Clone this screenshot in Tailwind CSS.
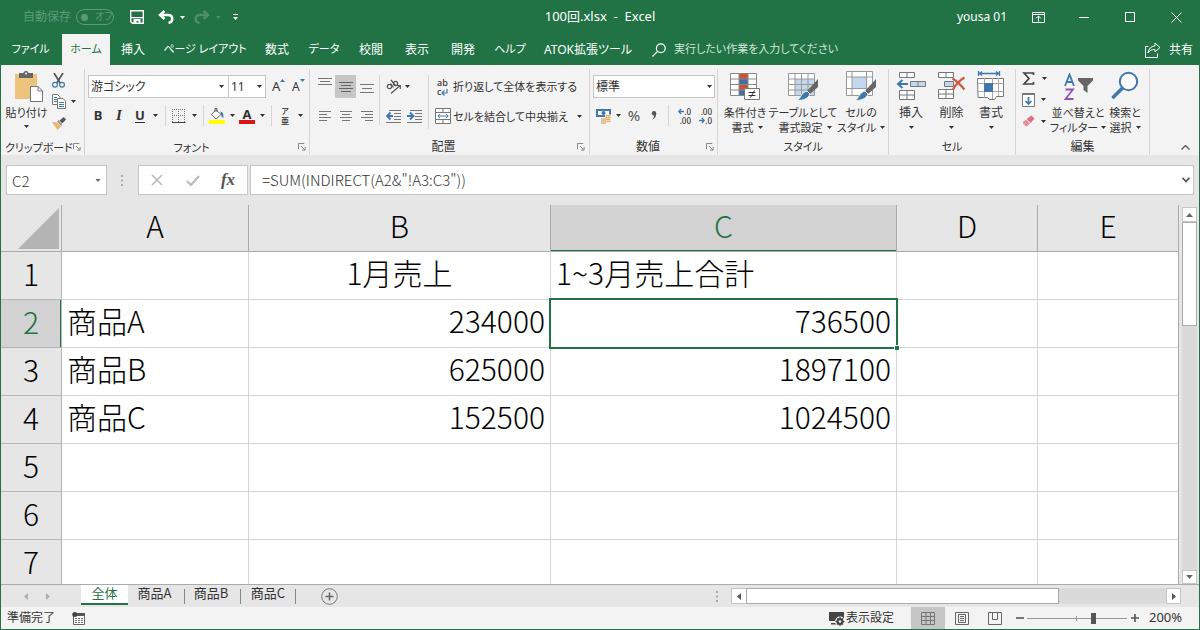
<!DOCTYPE html>
<html lang="ja">
<head>
<meta charset="utf-8">
<title>100回.xlsx - Excel</title>
<script src="https://cdn.jsdelivr.net/npm/@tailwindcss/browser@4"></script>
</head>
<body class="h-screen overflow-hidden text-xs text-[#262626] font-['Noto_Sans','Noto_Sans_CJK_JP',sans-serif] [font-feature-settings:'palt']">
<svg class="hidden">
  <symbol id="dn" viewBox="0 0 5 3"><path d="M0 0h5L2.500 3z" fill="currentColor"/></symbol>
  <symbol id="launch" viewBox="0 0 9 9"><path d="M.5 7V.5H7M3.500 3.500l4 4M8 4.500V8H4.500" fill="none" stroke="#777"/></symbol>
</svg>
<div class="flex h-full flex-col border-x border-b border-[#217346] bg-[#e6e6e6]">

  <!-- Title bar -->
  <header class="flex h-[34px] shrink-0 items-center bg-[#217346] text-white">
    <div class="flex flex-1 items-center">
      <span class="w-[75px] pl-[22px] text-[#5c9a78]">自動保存</span>
      <button class="flex h-4 w-[38px] items-center gap-[7px] whitespace-nowrap rounded-full border border-[#5c9a78] pl-1 text-[10px] text-[#5c9a78]"><span class="size-[7px] shrink-0 rounded-full bg-[#5c9a78]"></span>オフ</button>
      <button class="ml-[14px] flex w-[18px] justify-center" aria-label="上書き保存"><svg class="size-[14px]" viewBox="0 0 14 14"><path d="M.7.700h12.600v12.600H2.500L.7 11.500z" fill="none" stroke="#fff" stroke-width="1.400"/><path d="M1 7h12v1.300H1zM3.500 9h7v4.500H8.500v-2.500h-2v2.500h-3z" fill="#fff"/></svg></button>
      <button class="ml-[10px] flex w-5 justify-center" aria-label="元に戻す"><svg class="h-[14px] w-4" viewBox="0 0 16 14"><path d="M6.500 1L2 5l4.500 4M2.500 5H10c2.500 0 4.300 1.500 4.300 4 0 2-1.300 3.500-3.800 4" fill="none" stroke="#fff" stroke-width="2.400"/></svg></button>
      <button class="flex w-3 justify-center" aria-label="元に戻す一覧"><svg class="h-[3px] w-[5px]"><use href="#dn"/></svg></button>
      <button class="ml-1 flex w-5 justify-center" aria-label="やり直し"><svg class="h-[14px] w-4" viewBox="0 0 16 14"><path d="M9.500 1L14 5 9.500 9M13.500 5H6C3.500 5 1.700 6.500 1.700 9c0 2 1.300 3.500 3.800 4" fill="none" stroke="#4d8f6b" stroke-width="2.400"/></svg></button>
      <button class="flex w-3 justify-center text-[#4d8f6b]" aria-label="やり直し一覧"><svg class="h-[3px] w-[5px]"><use href="#dn"/></svg></button>
      <button class="ml-[3px] flex w-4 justify-center" aria-label="クイックアクセスのカスタマイズ"><svg class="h-[6px] w-[5px]" viewBox="0 0 5 6"><path d="M0 0h5v1H0zM0 3h5L2.500 6z" fill="#fff"/></svg></button>
    </div>
    <h1 class="whitespace-pre text-[13px]">100回.xlsx  -  Excel</h1>
    <div class="flex flex-1 items-center justify-end">
      <span class="mr-2">yousa 01</span>
      <button class="flex w-[46px] justify-center" aria-label="リボンの表示オプション"><svg class="h-[11px] w-[13px]" viewBox="0 0 13 11"><path d="M.5.500h12v10H.5zM.5 2.500h12M6.500 9.500V4.500M4 6.500l2.500-2.500L9 6.500" fill="none" stroke="#fff"/></svg></button>
      <button class="flex w-[46px] justify-center" aria-label="最小化"><svg class="h-[11px] w-[11px]" viewBox="0 0 11 11"><path d="M0 5.500h10" stroke="#fff"/></svg></button>
      <button class="flex w-[46px] justify-center" aria-label="最大化"><svg class="h-[11px] w-[11px]" viewBox="0 0 11 11"><path d="M.5.500h9v9h-9z" fill="none" stroke="#fff"/></svg></button>
      <button class="flex w-[46px] justify-center" aria-label="閉じる"><svg class="h-[11px] w-[11px]" viewBox="0 0 11 11"><path d="M.5.500l10 10M10.500.500l-10 10" stroke="#fff"/></svg></button>
    </div>
  </header>

  <!-- Ribbon tabs -->
  <nav class="flex h-[31px] shrink-0 items-stretch whitespace-nowrap bg-[#217346] text-white">
    <button class="w-[59px] text-[11px]">ファイル</button>
    <button class="ml-[2px] w-12 bg-[#f3f3f3] text-[11px] text-[#217346]">ホーム</button>
    <button class="w-[46px]">挿入</button>
    <button class="w-[98px] text-[11px]">ページ レイアウト</button>
    <button class="w-[46px]">数式</button>
    <button class="w-12 text-[11px]">データ</button>
    <button class="w-[46px]">校閲</button>
    <button class="w-[46px]">表示</button>
    <button class="w-[46px]">開発</button>
    <button class="w-12 text-[11px]">ヘルプ</button>
    <button class="w-[108px]">ATOK拡張ツール</button>
    <label class="ml-[10px] flex flex-1 items-center gap-2">
      <svg class="size-[14px]" viewBox="0 0 14 14" aria-hidden="true"><circle cx="8.800" cy="5.200" r="4.400" fill="none" stroke="#fff" stroke-width="1.200"/><path d="M5.600 8.400L.5 13.500" stroke="#fff" stroke-width="1.300"/></svg>
      <input class="w-56 bg-transparent text-[11px] outline-none placeholder:text-[#d3e5da]" placeholder="実行したい作業を入力してください" aria-label="操作アシスト">
    </label>
    <button class="flex items-center gap-2 pr-[6px]"><svg class="size-4" viewBox="0 0 16 16"><path d="M3.500 4.500H.5v11h12v-4M10 1l5 4.500L10 10V7.500C6.500 7.300 4.500 8.500 3 11c.4-4 3-6.700 7-7.200z" fill="none" stroke="#fff" stroke-linejoin="round"/></svg>共有</button>
  </nav>

  <!-- Ribbon -->
  <main class="contents">
  <div class="flex h-[90px] shrink-0 items-stretch whitespace-nowrap bg-[#f3f3f3] text-[11px] leading-[15px] text-[#333]">

    <section class="mt-1 flex w-[84px] flex-col border-r border-[#d5d5d5]" aria-label="クリップボード">
      <div class="flex h-[70px] shrink-0">
        <button class="flex w-[51px] flex-col items-center pt-[2px]">
          <svg class="ml-1 h-[31px] w-[28px]" viewBox="0 0 28 31"><path d="M0 3h22v25H0z" fill="#ecc37d"/><path d="M4 2h4.500C8.500.8 9.500 0 11 0s2.500.8 2.500 2H18v5H4z" fill="#666"/><circle cx="11" cy="2.500" r="1" fill="#fff"/><path d="M15.500 15.500h7.500l4.500 4.500v10.500h-12z" fill="#fff" stroke="#777"/><path d="M23 15.500v4.500h4.500" fill="none" stroke="#777"/></svg>
          <span class="mt-[3px]">貼り付け</span>
          <svg class="mt-[5px] h-[3px] w-[5px]"><use href="#dn"/></svg>
        </button>
        <div class="flex flex-col">
          <button class="flex h-[20px] items-center pt-[2px]" aria-label="切り取り"><svg class="h-[15px] w-[13px]" viewBox="0 0 13 15"><path d="M2 0l6.200 10M11 0L4.800 10" stroke="#555" stroke-width="1.700"/><circle cx="3" cy="11.700" r="2.400" fill="none" stroke="#3f78ad" stroke-width="1.200"/><circle cx="10" cy="11.700" r="2.400" fill="none" stroke="#3f78ad" stroke-width="1.200"/></svg></button>
          <button class="flex h-[24px] items-center" aria-label="コピー"><svg class="h-[15px] w-[14px]" viewBox="0 0 14 15"><path d="M.5.500h5l2.500 2.500v7.500H.5z" fill="#fff" stroke="#777"/><path d="M2 3.500h3M2 5.500h3M2 7.500h3" stroke="#3f78ad"/><path d="M5.500 4.500h5.500l2.500 2.500v7.500h-8z" fill="#fff" stroke="#777"/><path d="M7 8.500h5M7 10.500h5M7 12.500h5" stroke="#3f78ad"/></svg><svg class="ml-[5px] h-[3px] w-[5px]"><use href="#dn"/></svg></button>
          <button class="flex h-[20px] items-center" aria-label="書式のコピー/貼り付け"><svg class="h-[13px] w-[14px]" viewBox="0 0 14 13"><path d="M0 5l5 .5 4 4L5.500 13z" fill="#ecb56d"/><path d="M5 4.500L9 9l1.500-1.500-4-4.500z" fill="#999"/><path d="M7.500 3.500l2.500 2.700 1.500-1L14 2.500 11.800 0 9.300 2z" fill="#555"/></svg></button>
        </div>
      </div>
      <div class="flex h-4 items-center justify-between pl-1 pr-[3px]">クリップボード<button aria-label="クリップボードの詳細"><svg class="size-[8px]"><use href="#launch"/></svg></button></div>
    </section>

    <section class="mt-1 flex w-[225px] flex-col border-r border-[#d5d5d5]" aria-label="フォント">
      <div class="flex h-[70px] shrink-0 flex-col gap-[6px] pl-[3px] pt-[6px]">
        <div class="flex items-center">
          <div class="relative"><select aria-label="フォント名" class="h-[23px] w-[141px] appearance-none border border-[#c6c6c6] bg-white pl-[2px] text-xs leading-5"><option>游ゴシック</option></select><svg class="pointer-events-none absolute right-[5px] top-[10px] h-[3px] w-[5px]"><use href="#dn"/></svg></div>
          <div class="relative -ml-px"><select aria-label="フォント サイズ" class="h-[23px] w-[38px] appearance-none border border-[#c6c6c6] bg-white pl-[2px] text-xs leading-5"><option>11</option></select><svg class="pointer-events-none absolute right-1 top-[10px] h-[3px] w-[5px]"><use href="#dn"/></svg></div>
          <button class="ml-[6px] flex w-[21px] items-start text-[13px]" aria-label="フォント サイズの拡大">A<svg class="h-[3px] w-[5px]" viewBox="0 0 5 3"><path d="M0 3h5L2.500 0z" fill="#3f78ad"/></svg></button>
          <button class="flex w-[18px] items-start text-xs" aria-label="フォント サイズの縮小">A<svg class="h-[3px] w-[5px] text-[#3f78ad]"><use href="#dn"/></svg></button>
        </div>
        <div class="flex h-[23px] items-center text-[13px]">
          <button class="w-[20px] font-bold">B</button>
          <button class="w-[22px] font-['Liberation_Serif'] text-[15px] font-bold italic">I</button>
          <button class="w-[20px] font-bold underline underline-offset-2">U</button>
          <button class="flex w-[11px] justify-center" aria-label="下線の種類"><svg class="h-[3px] w-[5px]"><use href="#dn"/></svg></button>
          <span class="mx-1 h-[21px] w-px bg-[#d5d5d5]"></span>
          <button class="flex w-[18px] justify-center" aria-label="罫線"><svg class="size-[14px]" viewBox="0 0 14 14"><path d="M.5 0v13M6.500 0v13M12.500 0v13M0 .5h13M0 6.500h13" stroke="#777" stroke-dasharray="1 1"/><path d="M0 13.500h13.500" stroke="#444"/></svg></button>
          <button class="flex w-3 justify-center" aria-label="罫線の種類"><svg class="h-[3px] w-[5px]"><use href="#dn"/></svg></button>
          <span class="mx-[3px] h-[21px] w-px bg-[#d5d5d5]"></span>
          <button class="flex w-[20px] justify-center" aria-label="塗りつぶしの色"><svg class="size-4" viewBox="0 0 16 16"><path d="M0 12h16v4H0z" fill="#ff0"/><path d="M7 1.500L2.500 6.500l4.500 4.500 5-4.500-5-4.500z" fill="#fff" stroke="#666"/><path d="M6 4V.5h2V4" fill="none" stroke="#666"/><path d="M11.500 3.500c2 .5 3.500 2 2.800 6.500-1.500-.5-1.600-2-2.300-3.500z" fill="#3f78ad"/></svg></button>
          <button class="flex w-[10px] justify-center" aria-label="塗りつぶしの色一覧"><svg class="h-[3px] w-[5px]"><use href="#dn"/></svg></button>
          <button class="flex w-[20px] flex-col items-center text-[13px] font-bold leading-3" aria-label="フォントの色">A<span class="h-1 w-4 bg-[#dc1414]"></span></button>
          <button class="flex w-[11px] justify-center" aria-label="フォントの色一覧"><svg class="h-[3px] w-[5px]"><use href="#dn"/></svg></button>
          <span class="mx-[3px] h-[21px] w-px bg-[#d5d5d5]"></span>
          <button class="flex w-[20px] flex-col items-center text-[8px] font-medium leading-[10px]" aria-label="ふりがなの表示"><span>ア</span><span>亜</span></button>
          <button class="flex w-[10px] justify-center" aria-label="ふりがなの設定"><svg class="h-[3px] w-[5px]"><use href="#dn"/></svg></button>
        </div>
      </div>
      <div class="flex h-4 items-center pr-[3px]"><span class="flex-1 text-center">フォント</span><button aria-label="フォントの詳細"><svg class="size-[8px]"><use href="#launch"/></svg></button></div>
    </section>

    <section class="mt-1 flex w-[280px] flex-col border-r border-[#d5d5d5]" aria-label="配置">
      <div class="flex h-[70px] shrink-0 pt-[6px]">
        <div class="grid h-[53px] grid-cols-[21px_21px_21px] grid-rows-[23px_24px] gap-y-[6px] pl-1">
          <button class="flex items-start justify-center pt-[3px]" aria-label="上揃え"><svg class="h-[7px] w-[14px]" viewBox="0 0 14 7"><path d="M0 .5h14M2 3.500h10M0 6.500h14" stroke="#777"/></svg></button>
          <button class="flex items-center justify-center bg-[#c6c6c6]" aria-label="上下中央揃え" aria-pressed="true"><svg class="h-[10px] w-[14px]" viewBox="0 0 14 10"><path d="M0 .5h14M2 3.500h10M0 6.500h14M2 9.500h10" stroke="#666"/></svg></button>
          <button class="flex items-end justify-center pb-1" aria-label="下揃え"><svg class="h-[10px] w-[14px]" viewBox="0 0 14 10"><path d="M0 .5h14M2 4.500h10M0 8.500h14" stroke="#777"/></svg></button>
          <button class="flex items-center justify-center" aria-label="左揃え"><svg class="h-[10px] w-[12px]" viewBox="0 0 12 10"><path d="M0 .5h12M0 3.500h8M0 6.500h12M0 9.500h8" stroke="#777"/></svg></button>
          <button class="flex items-center justify-center" aria-label="中央揃え"><svg class="h-[10px] w-[12px]" viewBox="0 0 12 10"><path d="M0 .5h12M2 3.500h8M0 6.500h12M2 9.500h8" stroke="#777"/></svg></button>
          <button class="flex items-center justify-center" aria-label="右揃え"><svg class="h-[10px] w-[12px]" viewBox="0 0 12 10"><path d="M0 .5h12M4 3.500h8M0 6.500h12M4 9.500h8" stroke="#777"/></svg></button>
        </div>
        <span class="ml-[2px] h-[50px] w-px bg-[#d5d5d5]"></span>
        <div class="flex w-[48px] flex-col gap-[6px] pl-[6px]">
          <button class="flex h-[23px] items-center gap-[3px]" aria-label="方向"><svg class="size-4" viewBox="0 0 16 16"><g fill="none" stroke="#555" stroke-width="1.200"><circle cx="3.500" cy="7.500" r="2.200"/><path d="M4.500 4.500l3 4M5 1l4.500 5.500"/><circle cx="9.500" cy="4.500" r="2.100"/><path d="M5 14.500l9-8M10.500 6.500h3.800v3.500"/></g></svg><svg class="h-[3px] w-[5px]"><use href="#dn"/></svg></button>
          <div class="flex h-[24px] items-center gap-[6px]">
            <button aria-label="インデントを減らす"><svg class="block h-[14px] w-[15px]" viewBox="0 0 15 14"><path d="M3 1.500h12M8 4.500h7M8 7.500h7M8 10.500h7M0 13.500h15" stroke="#777"/><path d="M7 7H1.500M4.500 3.500L1 7l3.500 3.500" fill="none" stroke="#3f78ad" stroke-width="1.800"/></svg></button>
            <button aria-label="インデントを増やす"><svg class="block h-[14px] w-[15px]" viewBox="0 0 15 14"><path d="M3 1.500h12M8 4.500h7M8 7.500h7M8 10.500h7M0 13.500h15" stroke="#777"/><path d="M0 7h5.500M3 3.500L6.500 7 3 10.500" fill="none" stroke="#3f78ad" stroke-width="1.800"/></svg></button>
          </div>
        </div>
        <span class="h-[54px] w-px bg-[#d5d5d5]"></span>
        <div class="flex flex-1 flex-col gap-[6px] pl-[6px]">
          <button class="flex h-[23px] items-center"><span class="flex w-[18px] flex-col pl-[2px] text-left text-[9px] font-medium leading-[9px]"><span>ab</span><span class="flex">c<svg class="mt-[2px] h-[7px] w-[7px]" viewBox="0 0 7 7"><path d="M6 0v4H1.500M3.500 1.500L1 4l2.500 2.500" fill="none" stroke="#3f78ad" stroke-width="1.200"/></svg></span></span>折り返して全体を表示する</button>
          <button class="flex h-[24px] items-center"><svg class="mr-[2px] size-4" viewBox="0 0 16 16"><path d="M.5.500h15v15H.5zM.5 4.500h15M.5 11.500h15M8 .5v4M8 11.500v4" fill="#fff" stroke="#777"/><path d="M3 8h10M5 5.800L2.800 8 5 10.200M11 5.800L13.200 8 11 10.200" fill="none" stroke="#3f78ad"/></svg>セルを結合して中央揃え<svg class="ml-auto mr-[7px] h-[3px] w-[5px]"><use href="#dn"/></svg></button>
        </div>
      </div>
      <div class="flex h-4 items-center pr-1"><span class="flex-1 text-center text-xs">配置</span><button aria-label="配置の詳細"><svg class="size-[8px]"><use href="#launch"/></svg></button></div>
    </section>

    <section class="mt-1 flex w-[128px] flex-col border-r border-[#d5d5d5]" aria-label="数値">
      <div class="flex h-[70px] shrink-0 flex-col gap-[6px] pl-[3px] pt-[6px]">
        <div class="relative w-[122px]"><select aria-label="表示形式" class="block h-[23px] w-full appearance-none border border-[#c6c6c6] bg-white pl-[2px] text-xs leading-5"><option>標準</option></select><svg class="pointer-events-none absolute right-[3px] top-[10px] h-[3px] w-[5px]"><use href="#dn"/></svg></div>
        <div class="flex h-[23px] items-center">
          <button class="ml-[3px]" aria-label="通貨表示形式"><svg class="h-[16px] w-[16px]" viewBox="0 0 16 16"><path d="M0 1h15v8H0z" fill="#3f78ad"/><path d="M2 3h11v4H2z" fill="#fff"/><circle cx="7.500" cy="5" r="2" fill="#3f78ad"/><path d="M4.500 10h6v5h-6zM9 6.500h6v8H9z" fill="#f3f3f3"/><path d="M5 11h5M5 13h5M5 15h5M9.500 7.500h5M9.500 9.500h5M9.500 11.500h5M10.500 13.500h4" stroke="#e3b273" stroke-width="1.300"/></svg></button>
          <button class="flex w-3 justify-center" aria-label="通貨の種類"><svg class="h-[3px] w-[5px]"><use href="#dn"/></svg></button>
          <button class="w-[20px] text-[15px] text-[#555]">%</button>
          <button class="flex w-[20px] justify-center" aria-label="桁区切りスタイル"><svg class="h-[9px] w-[6px]" viewBox="0 0 6 9"><circle cx="3" cy="2.300" r="2.200" fill="#555"/><path d="M5.200 2.300C5.200 5.500 4 7.500 1.500 8.500 3 6.500 3.300 5 3 3.500z" fill="#555"/></svg></button>
          <span class="ml-1 mr-[3px] h-[21px] w-px bg-[#d5d5d5]"></span>
          <button class="flex w-[21px] flex-col items-end pr-[2px] text-[8px] font-medium leading-[9px]" aria-label="小数点以下の表示桁数を増やす"><span class="flex items-center"><svg class="h-[7px] w-[6px]" viewBox="0 0 6 7"><path d="M6 3.500H1M3 1L.8 3.500 3 6" fill="none" stroke="#3f78ad" stroke-width="1.300"/></svg>.0</span><span>.00</span></button>
          <button class="flex w-[21px] flex-col items-end pr-[2px] text-[8px] font-medium leading-[9px]" aria-label="小数点以下の表示桁数を減らす"><span>.00</span><span class="flex items-center"><svg class="h-[7px] w-[6px]" viewBox="0 0 6 7"><path d="M0 3.500h5M3 1l2.200 2.500L3 6" fill="none" stroke="#3f78ad" stroke-width="1.300"/></svg>.0</span></button>
        </div>
      </div>
      <div class="flex h-4 items-center pr-[3px]"><span class="flex-1 text-center text-xs">数値</span><button aria-label="表示形式の詳細"><svg class="size-[8px]"><use href="#launch"/></svg></button></div>
    </section>

    <section class="mt-1 flex w-[171px] flex-col border-r border-[#d5d5d5]" aria-label="スタイル">
      <div class="flex h-[70px] shrink-0 pt-[2px]">
        <button class="flex w-[54px] flex-col items-center"><svg class="mb-[3px] h-[31px] w-[30px]" viewBox="0 0 30 31"><path d="M.5 2.500h26v22H.5z" fill="#fff"/><path d="M9 2h9v6H9zM9 14h9v5H9z" fill="#c75339"/><path d="M9 8h9v6H9zM9 19h6v6H9z" fill="#3f6fa5"/><path d="M.5 2.500h26v22H.5zM.5 8h26M.5 13.500h26M.5 19h26M9 2v23M18 2v23" fill="none" stroke="#888"/><path d="M14.500 17.500h15v11h-15z" fill="#fff" stroke="#777"/><path d="M18.500 21.500h7M18.500 24.500h7M24.500 19.500l-4 7" stroke="#333"/></svg><span>条件付き</span><span class="flex items-center gap-1 pl-1">書式<svg class="h-[3px] w-[5px]"><use href="#dn"/></svg></span></button>
        <button class="flex w-[62px] flex-col items-center"><svg class="mb-[3px] h-[31px] w-[32px]" viewBox="0 0 32 31"><path d="M1.500 2.500h26v22h-26z" fill="#fff"/><path d="M8 8h20v17H8z" fill="#c3d8ee"/><path d="M1.500 2.500h26v22h-26zM1.500 8h26M1.500 13.500h26M1.500 19h26M8 2v23M14.500 2v23M21 2v23" fill="none" stroke="#999"/><path d="M31 8v8l-8 7-3-3z" fill="#666"/><path d="M20 20l3 3c-2 5-7 6.500-13 6.500 4-2 4-8 10-9.500z" fill="#3f78ad" stroke="#f3f3f3"/></svg><span>テーブルとして</span><span class="flex items-center gap-1 pl-1">書式設定<svg class="h-[3px] w-[5px]"><use href="#dn"/></svg></span></button>
        <button class="flex w-[54px] flex-col items-center"><svg class="mb-[3px] h-[31px] w-[32px]" viewBox="0 0 32 31"><path d="M1.500.500h26v24h-26z" fill="#fff"/><path d="M7 6h14v11H7z" fill="#c3d8ee"/><path d="M1.500.500h26v24h-26zM1.500 6h26M1.500 17.500h26M7 0v25M21.500 0v25" fill="none" stroke="#999"/><path d="M31 8v8l-8 7-3-3z" fill="#666"/><path d="M20 20l3 3c-2 5-7 6.500-13 6.500 4-2 4-8 10-9.500z" fill="#3f78ad" stroke="#f3f3f3"/></svg><span>セルの</span><span class="flex items-center gap-1">スタイル<svg class="h-[3px] w-[5px]"><use href="#dn"/></svg></span></button>
      </div>
      <div class="h-4 text-center">スタイル</div>
    </section>

    <section class="mt-1 flex w-[127px] flex-col border-r border-[#d5d5d5]" aria-label="セル">
      <div class="flex h-[70px] shrink-0 pl-[2px] pt-[2px] text-xs leading-[15px]">
        <button class="flex w-10 flex-col items-center"><svg class="mb-[3px] h-[31px] w-[30px]" viewBox="0 0 30 31"><path d="M3.500 1.500h15v5h-15zM11 1v6M3.500 19.500h15v9h-15zM3.500 24h15M11 19v10" fill="#fff" stroke="#777"/><path d="M14.500 10.500h15v5h-15zM22 10v6" fill="#c3d8ee" stroke="#777"/><path d="M12 13H3M6.500 9L2 13l4.500 4" fill="none" stroke="#3f78ad" stroke-width="2"/></svg><span>挿入</span><svg class="mt-[6px] h-[3px] w-[5px]"><use href="#dn"/></svg></button>
        <button class="flex w-[41px] flex-col items-center"><svg class="mb-[3px] h-[31px] w-[28px]" viewBox="0 0 28 31"><path d="M.5 1.500h15v5H.5zM8 1v6M.5 18.500h15v9H.5zM.5 23h15M8 18v10" fill="#fff" stroke="#777"/><path d="M6.500 10.500h9v5h-9z" fill="#c3d8ee" stroke="#777"/><path d="M14.500 7.500c5 3 9 7.500 12 11M26.500 6.500c-5 3-9 7-11.500 12" fill="none" stroke="#d0573d" stroke-width="2.200"/></svg><span>削除</span><svg class="mt-[6px] h-[3px] w-[5px]"><use href="#dn"/></svg></button>
        <button class="flex w-[38px] flex-col items-center"><svg class="mb-[3px] h-[31px] w-[28px]" viewBox="0 0 28 31"><path d="M1.500 0v5M22.500 0v5M2 2.500h20M5 .5L2.500 2.500 5 4.500M19 .5l2.500 2L19 4.500" fill="none" stroke="#3f78ad" stroke-width="1.300"/><path d="M.5 7.500h26v18h-7l-2 3h-5l-2-2H1z" fill="#fff" stroke="#777"/><path d="M.5 12.500h26M.5 20.500h26M7.500 7v20M15.500 7v21M21.500 7v18" stroke="#aaa"/><path d="M7 12h9v9H7z" fill="#3f78ad"/></svg><span>書式</span><svg class="mt-[6px] h-[3px] w-[5px]"><use href="#dn"/></svg></button>
      </div>
      <div class="h-4 text-center">セル</div>
    </section>

    <section class="mt-1 flex w-[134px] flex-col border-r border-[#d5d5d5]" aria-label="編集">
      <div class="flex h-[70px] shrink-0">
        <div class="flex w-[36px] flex-col pl-[6px]">
          <button class="flex h-[19px] items-center gap-[7px]" aria-label="オート SUM"><svg class="h-[13px] w-[13px]" viewBox="0 0 13 13"><path d="M11.500 3V1H2l5 5.500L2 12h9.500v-2" fill="none" stroke="#444" stroke-width="1.700"/></svg><svg class="h-[3px] w-[5px]"><use href="#dn"/></svg></button>
          <button class="flex h-[23px] items-center gap-[6px]" aria-label="フィル"><svg class="h-[14px] w-[13px]" viewBox="0 0 13 14"><path d="M.5.500h12v13H.5z" fill="#fff" stroke="#777"/><path d="M0 0h13v2H0z" fill="#777"/><path d="M6.500 4v7M3.500 8l3 3 3-3" fill="none" stroke="#3f78ad" stroke-width="1.700"/></svg><svg class="h-[3px] w-[5px]"><use href="#dn"/></svg></button>
          <button class="flex h-[20px] items-center gap-[6px]" aria-label="クリア"><svg class="h-[12px] w-[13px]" viewBox="0 0 13 12"><path d="M1 7l3-2.500 4 4L5 11.500H4L1 8.500z" fill="#e8919d"/><path d="M4.700 4L9.500.5l3 3-3.800 4.500z" fill="#dc6f80"/></svg><svg class="h-[3px] w-[5px]"><use href="#dn"/></svg></button>
        </div>
        <button class="flex w-[52px] flex-col items-center pt-[2px]"><span class="mb-[3px] flex h-[31px] items-center gap-[3px]"><svg class="h-[28px] w-[11px]" viewBox="0 0 11 28" fill="none" stroke-width="1.800"><path d="M1 13L5.500 1.500 10 13M2.500 9h6" stroke="#3f78ad"/><path d="M1.500 16.500h7.500L1.500 26H9.500" stroke="#9151b5"/></svg><svg class="mb-[2px] h-[15px] w-[15px]" viewBox="0 0 15 15"><path d="M0 0h15v2.500L9.500 8v7L5.500 12V8L0 2.500z" fill="#666"/></svg></span><span>並べ替えと</span><span class="flex items-center gap-[3px]">フィルター<svg class="h-[3px] w-[5px]"><use href="#dn"/></svg></span></button>
        <button class="flex w-[42px] flex-col items-center pt-[2px]"><svg class="mb-[3px] h-[31px] w-[28px]" viewBox="0 0 28 31"><circle cx="17.500" cy="10.500" r="8.700" fill="#fff" stroke="#3f78ad" stroke-width="2"/><path d="M11 17.500L2.500 26" stroke="#3f78ad" stroke-width="3.600" stroke-linecap="round"/></svg><span>検索と</span><span class="flex items-center gap-1">選択<svg class="h-[3px] w-[5px]"><use href="#dn"/></svg></span></button>
      </div>
      <div class="h-4 text-center text-xs leading-[15px]">編集</div>
    </section>
    <button class="ml-auto self-end p-2 pr-[9px]" aria-label="リボンを折りたたむ"><svg class="mb-[-3px] h-[5px] w-[9px]" viewBox="0 0 9 5"><path d="M.5 4.500l4-4 4 4" fill="none" stroke="#555" stroke-width="1.300"/></svg></button>
  </div>

  <!-- Formula bar -->
  <div class="flex h-[50px] shrink-0 items-center pb-px pl-[5px] pr-[5px] pt-[1px] font-['Noto_Sans_CJK_JP',sans-serif] font-light [font-feature-settings:normal]">
    <div class="relative"><input aria-label="名前ボックス" value="C2" class="block h-[30px] w-[101px] border border-[#c6c6c6] bg-white pl-[5px] text-[15px] text-[#333]"><svg class="pointer-events-none absolute right-[6px] top-[14px] h-[3px] w-[6px] text-[#666]"><use href="#dn"/></svg></div>
    <svg class="mx-[14px] h-[11px] w-[3px]" viewBox="0 0 3 11"><path d="M0 0h2v2H0zM0 4.500h2v2H0zM0 9h2v2H0z" fill="#aaa"/></svg>
    <div class="flex h-[30px] w-[110px] items-center border border-[#c6c6c6] bg-white">
      <button class="flex w-[35px] justify-center" aria-label="キャンセル"><svg class="size-3" viewBox="0 0 12 12"><path d="M1 1l10 10M11 1L1 11" stroke="#bbb" stroke-width="1.600"/></svg></button>
      <button class="flex w-[37px] justify-center" aria-label="入力"><svg class="h-[11px] w-[14px]" viewBox="0 0 14 11"><path d="M1 6l4 4 8-9" fill="none" stroke="#bbb" stroke-width="2.200"/></svg></button>
      <button class="w-[34px] font-['Liberation_Serif'] text-[17px] font-bold italic text-[#555]" aria-label="関数の挿入">fx</button>
    </div>
    <div class="relative ml-[2px] flex-1"><input aria-label="数式バー" value="=SUM(INDIRECT(A2&amp;&quot;!A3:C3&quot;))" class="block h-[30px] w-full border border-[#c6c6c6] bg-white pb-[2px] pl-[11px] text-[15px] text-[#333]"><svg class="absolute right-1 top-[12px] h-[6px] w-[8px]" viewBox="0 0 8 6"><path d="M.5.800L4 4.500 7.500.800" fill="none" stroke="#555" stroke-width="1.800"/></svg></div>
  </div>

  <!-- Worksheet -->
  <div class="flex min-h-0 flex-1">
    <div class="min-w-0 flex-1 overflow-hidden border-r border-[#ababab] bg-white">
      <table class="w-full table-fixed border-separate border-spacing-0 whitespace-nowrap font-['Noto_Sans_CJK_JP',sans-serif] text-3xl font-light leading-[40px] text-black [font-feature-settings:normal] [&_td]:h-12 [&_td]:border-b [&_td]:border-r [&_td]:border-[#d4d4d4] [&_td]:px-[5px] [&_td]:pb-[7px] [&_td]:pt-0 [&_tbody_th]:border-b [&_tbody_th]:border-r [&_tbody_th]:border-[#b5b5b5] [&_th]:px-0 [&_th]:pb-[6px] [&_th]:pt-0 [&_th]:font-light">
        <colgroup><col class="w-[61px]"><col class="w-[187px]"><col class="w-[302px]"><col class="w-[346px]"><col class="w-[141px]"><col></colgroup>
        <thead>
          <tr class="h-[47px] bg-[#e6e6e6] [&_th]:border-b [&_th]:border-r [&_th]:border-[#ababab]">
            <th class="pb-0!"><button class="flex w-full justify-end pr-[2px]" aria-label="すべて選択"><svg class="h-[41px] w-[41px]" viewBox="0 0 41 41"><path d="M41 0v41H0z" fill="#b4b4b4"/></svg></button></th>
            <th scope="col">A</th><th scope="col">B</th>
            <th scope="col" class="bg-[#d2d2d2] text-[#217346] shadow-[inset_0_-1px_0_#217346]">C</th>
            <th scope="col">D</th><th scope="col" class="border-r-0!">E</th>
          </tr>
        </thead>
        <tbody>
          <tr><th scope="row" class="bg-[#e6e6e6]">1</th><td></td><td class="text-center">1月売上</td><td>1~3月売上合計</td><td></td><td class="border-r-0!"></td></tr>
          <tr><th scope="row" class="bg-[#d2d2d2] text-[#217346] shadow-[inset_-1px_0_0_#217346]">2</th><td>商品A</td><td class="text-right">234000</td><td class="relative text-right">736500<span class="absolute -inset-[2px] border-2 border-[#217346]"></span><span class="absolute -bottom-[3px] -right-[3px] size-[5px] border-l border-t border-white bg-[#217346]"></span></td><td></td><td class="border-r-0!"></td></tr>
          <tr><th scope="row" class="bg-[#e6e6e6]">3</th><td>商品B</td><td class="text-right">625000</td><td class="text-right">1897100</td><td></td><td class="border-r-0!"></td></tr>
          <tr><th scope="row" class="bg-[#e6e6e6]">4</th><td>商品C</td><td class="text-right">152500</td><td class="text-right">1024500</td><td></td><td class="border-r-0!"></td></tr>
          <tr><th scope="row" class="bg-[#e6e6e6]">5</th><td></td><td></td><td></td><td></td><td class="border-r-0!"></td></tr>
          <tr><th scope="row" class="bg-[#e6e6e6]">6</th><td></td><td></td><td></td><td></td><td class="border-r-0!"></td></tr>
          <tr><th scope="row" class="bg-[#e6e6e6]">7</th><td></td><td></td><td></td><td></td><td class="border-r-0!"></td></tr>
        </tbody>
      </table>
    </div>
    <div class="ml-[3px] mr-[2px] mt-[2px] flex w-[15px] flex-col bg-[#dadada]">
      <button class="flex h-[15px] items-center justify-center border border-[#c6c6c6] bg-white" aria-label="上へスクロール"><svg class="h-1 w-[7px]" viewBox="0 0 7 4"><path d="M0 4h7L3.500 0z" fill="#666"/></svg></button>
      <div class="h-[104px] border border-[#ababab] bg-white"></div>
      <button class="mt-auto flex h-[14px] items-center justify-center border border-[#c6c6c6] bg-white" aria-label="下へスクロール"><svg class="h-1 w-[7px] text-[#666]"><use href="#dn"/></svg></button>
    </div>
  </div>
  </main>

  <!-- Sheet tabs and horizontal scroll bar -->
  <div class="flex h-[23px] shrink-0 items-stretch border-t border-[#ababab] font-['Noto_Sans_CJK_JP',sans-serif] text-[13px] leading-[15px] text-[#333]">
    <button class="flex w-[48px] items-center justify-end pr-[21px]" aria-label="前のシート"><svg class="h-[7px] w-1" viewBox="0 0 4 7"><path d="M4 0v7L0 3.500z" fill="#b0b0b0"/></svg></button>
    <button class="flex w-[32px] items-center justify-start" aria-label="次のシート"><svg class="-ml-[3px] h-[7px] w-1" viewBox="0 0 4 7"><path d="M0 0v7l4-3.500z" fill="#b0b0b0"/></svg></button>
    <button class="mb-[2px] w-[47px] border-b-2 border-[#217346] bg-white pb-1 text-[#217346]">全体</button>
    <button class="w-14 pb-2 pr-[3px]">商品A</button><span class="mb-[3px] mt-1 w-px bg-[#888]"></span>
    <button class="w-[55px] pb-2 pr-[3px]">商品B</button><span class="mb-[3px] mt-1 w-px bg-[#888]"></span>
    <button class="w-[54px] pb-2">商品C</button><span class="mb-[3px] mt-1 w-px bg-[#888]"></span>
    <button class="ml-[25px] flex items-center" aria-label="新しいシート"><svg class="size-[17px]" viewBox="0 0 17 17"><circle cx="8.500" cy="8.500" r="7.800" fill="none" stroke="#777"/><path d="M4.500 8.500h8M8.500 4.500v8" stroke="#666" stroke-width="1.500"/></svg></button>
    <svg class="ml-auto mr-[13px] h-[11px] w-[2px] self-center" viewBox="0 0 2 11"><path d="M0 0h2v2H0zM0 4.500h2v2H0zM0 9h2v2H0z" fill="#aaa"/></svg>
    <div class="mr-[18px] mt-[3px] flex h-4 w-[450px] bg-[#dadada]">
      <button class="flex w-4 items-center justify-center border border-[#c6c6c6] bg-white" aria-label="左へスクロール"><svg class="h-[7px] w-1" viewBox="0 0 4 7"><path d="M4 0v7L0 3.500z" fill="#555"/></svg></button>
      <div class="-ml-px w-[313px] border border-[#ababab] bg-white"></div>
      <button class="ml-auto flex w-[15px] items-center justify-center border border-[#c6c6c6] bg-white" aria-label="右へスクロール"><svg class="h-[7px] w-1" viewBox="0 0 4 7"><path d="M0 0v7l4-3.500z" fill="#555"/></svg></button>
    </div>
  </div>

  <!-- Status bar -->
  <footer class="flex h-[22px] shrink-0 items-center bg-[#f3f3f3] pl-[6px] text-[#333]">
    <span>準備完了</span>
    <button class="ml-[17px]" aria-label="マクロの記録"><svg class="h-[13px] w-[13px]" viewBox="0 0 13 13"><path d="M1.500 3.500h11v9h-11z" fill="#fff" stroke="#666"/><path d="M5 1h8v3H5z" fill="#555"/><circle cx="2.800" cy="2.500" r="2.500" fill="#444"/><path d="M3 6.500h8M3 8.500h8M3 10.500h8" stroke="#666" stroke-dasharray="2 1"/></svg></button>
    <button class="ml-auto flex items-center gap-px"><svg class="h-[15px] w-4" viewBox="0 0 16 15"><path d="M0 1h15v9H0zM2 12h5v1.500H2z" fill="#444"/><circle cx="11" cy="10.500" r="5" fill="#f3f3f3"/><circle cx="11" cy="10.500" r="2.600" fill="none" stroke="#444" stroke-width="2"/><path d="M11 6v9M6.500 10.500h9M8 7.500l6 6M14 7.500l-6 6" stroke="#444" stroke-width="1.200"/><circle cx="11" cy="10.500" r="1.300" fill="#f3f3f3"/></svg>表示設定</button>
    <button class="ml-[17px] flex h-full w-[34px] items-center justify-center bg-[#c6c6c6]" aria-label="標準" aria-pressed="true"><svg class="h-[13px] w-[14px]" viewBox="0 0 14 13"><path d="M.5.500h13v12H.5zM.5 4.500h13M.5 8.500h13M5 0v13M9.500 0v13" fill="none" stroke="#777"/></svg></button>
    <button class="flex w-[33px] justify-center" aria-label="ページ レイアウト"><svg class="h-[13px] w-[14px]" viewBox="0 0 14 13"><path d="M.5.500h13v12H.5zM3.500 2.500h7v8h-7zM5 4.500h4M5 6.500h4M5 8.500h4" fill="none" stroke="#666"/></svg></button>
    <button class="flex w-[34px] justify-center" aria-label="改ページ プレビュー"><svg class="h-[13px] w-[14px]" viewBox="0 0 14 13"><path d="M.5.500h13v12H.5zM4.500.500v7h5v-7" fill="none" stroke="#666"/></svg></button>
    <button class="ml-1 flex w-[11px]" aria-label="縮小"><svg class="h-2 w-2" viewBox="0 0 8 8"><path d="M0 4h8" stroke="#555" stroke-width="1.600"/></svg></button>
    <div class="relative flex items-center"><span class="absolute left-[49px] h-[5px] w-px bg-[#999]"></span><input type="range" min="0" max="100" value="67" aria-label="ズーム" class="relative h-[13px] w-[100px] appearance-none bg-transparent [&::-webkit-slider-runnable-track]:h-px [&::-webkit-slider-runnable-track]:bg-[#999] [&::-webkit-slider-thumb]:-mt-[5px] [&::-webkit-slider-thumb]:h-[11px] [&::-webkit-slider-thumb]:w-[5px] [&::-webkit-slider-thumb]:appearance-none [&::-webkit-slider-thumb]:bg-[#555]"></div>
    <button class="ml-1 flex" aria-label="拡大"><svg class="size-[8px]" viewBox="0 0 8 8"><path d="M0 4h8M4 0v8" stroke="#555" stroke-width="1.600"/></svg></button>
    <span class="ml-[10px] w-[50px] text-[13px]">200%</span>
  </footer>
</div>
</body>
</html>
